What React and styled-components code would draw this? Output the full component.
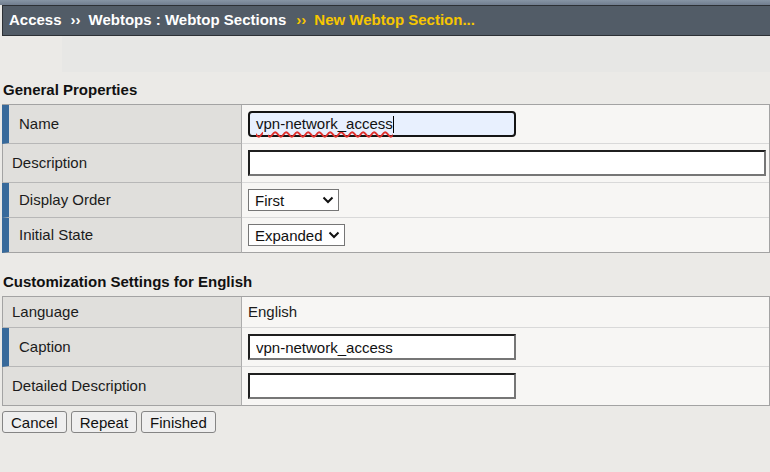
import styled, { createGlobalStyle } from 'styled-components';

const GlobalStyle = createGlobalStyle`
  html, body {
    margin: 0;
    background: #ebeae7;
    font-family: 'Liberation Sans', Arial, sans-serif;
    color: #1b1b1b;
  }
`;

const Page = styled.div`
  padding-left: 2px;
`;

const TopStrip = styled.div`
  background: linear-gradient(#8795a5, #707d8e);
  height: 5px;
  margin-left: -2px;
`;

const Breadcrumb = styled.div`
  background: #525c67;
  border-top: 1px solid #2c3035;
  border-bottom: 1px solid #2c3035;
  border-left: 1px solid #2c3035;
  color: #fff;
  font-size: 15px;
  font-weight: bold;
  height: 29px;
  line-height: 28px;
  padding-left: 6px;
  white-space: nowrap;
`;

const Crumb = styled.span`
  color: ${p => (p.current ? '#f7c600' : '#fff')};
`;

const Sep = styled.span`
  color: ${p => (p.current ? '#f7c600' : '#fff')};
  padding: 0 8px 0 ${p => (p.current ? 10 : 9)}px;
`;

const ToolbarBand = styled.div`
  height: 36px;
  margin-left: 60px;
  background: #e7e7e5;
`;

const Heading = styled.div`
  font-size: 15px;
  font-weight: bold;
  line-height: 18px;
  margin-top: ${p => p.gap}px;
  padding: 0 1px 5px;
  color: #111;
`;

const Table = styled.div`
  border-top: 1px solid #a3a3a3;
  border-right: 1px solid #a3a3a3;
`;

const Row = styled.div`
  display: flex;
  &:last-child > * {
    border-bottom-color: #a3a3a3;
  }
`;

const Label = styled.div`
  box-sizing: border-box;
  flex: 0 0 240px;
  display: flex;
  align-items: center;
  background: #e0dfdc;
  border-left: ${p => (p.required ? '7px solid #386a9b' : '1px solid #a3a3a3')};
  border-right: 1px solid #adadad;
  border-bottom: 1px solid #b7b7b7;
  padding-left: ${p => (p.required ? 10 : 9)}px;
  padding-bottom: 1px;
  font-size: 15px;
`;

const Value = styled.div`
  flex: 1;
  display: flex;
  align-items: center;
  background: #f7f6f4;
  border-bottom: 1px solid #d9d9d9;
  padding: 6px 3px 6px 6px;
  font-size: 15px;
  line-height: 18px;
`;

const TextInput = styled.input`
  box-sizing: border-box;
  width: ${p => (p.wide ? '100%' : '268px')};
  height: 26px;
  margin: 0;
  padding: 0 6px;
  background: #fff;
  border: 2px solid;
  border-color: #1f1f1f #767676 #767676 #1f1f1f;
  font-family: inherit;
  font-size: 15px;
  color: #111;
  outline: none;
`;

const FocusedInput = styled.div`
  box-sizing: border-box;
  width: 268px;
  height: 26px;
  display: flex;
  align-items: center;
  padding: 0 6px;
  background: #e8f0fe;
  border: 2px solid #141414;
  border-radius: 4px;
  font-size: 15px;
  color: #111;
`;

const Typed = styled.span`
  text-decoration: underline wavy #e0302c;
  text-decoration-thickness: 1.5px;
  text-underline-offset: 2px;
`;

const Caret = styled.span`
  display: inline-block;
  width: 1px;
  height: 17px;
  background: #000;
`;

const SelectWrap = styled.div`
  position: relative;
  display: inline-flex;
`;

const Select = styled.select`
  appearance: none;
  box-sizing: border-box;
  width: ${p => p.w}px;
  height: 22px;
  margin: 0;
  padding: 0 20px 0 6px;
  background: #fff;
  border: 1px solid #767676;
  border-radius: 0;
  font-family: inherit;
  font-size: 15px;
  color: #111;
`;

const Chevron = styled.svg`
  position: absolute;
  right: 5px;
  top: 7px;
  pointer-events: none;
`;

const Buttons = styled.div`
  display: flex;
  gap: 4px;
  margin-top: 5px;
`;

const Button = styled.button`
  height: 22px;
  padding: 0 8px;
  background: #efefef;
  border: 1px solid #858585;
  border-radius: 3px;
  font-family: inherit;
  font-size: 15px;
  color: #111;
`;

function Dropdown({ value, options, width }) {
  return (
    <SelectWrap>
      <Select w={width} defaultValue={value}>
        {options.map(o => <option key={o}>{o}</option>)}
      </Select>
      <Chevron width="12" height="8" viewBox="0 0 12 8">
        <path d="M1.5 1.5 L6 6 L10.5 1.5" fill="none" stroke="#111" strokeWidth="2" />
      </Chevron>
    </SelectWrap>
  );
}

export default function App() {
  return (
    <>
      <GlobalStyle />
      <Page>
        <TopStrip />
        <Breadcrumb>
          <Crumb>Access</Crumb>
          <Sep>››</Sep>
          <Crumb>Webtops : Webtop Sections</Crumb>
          <Sep current>››</Sep>
          <Crumb current>New Webtop Section...</Crumb>
        </Breadcrumb>
        <ToolbarBand />

        <Heading gap={9}>General Properties</Heading>
        <Table>
          <Row>
            <Label required>Name</Label>
            <Value>
              <FocusedInput>
                <Typed>vpn-network_access</Typed>
                <Caret />
              </FocusedInput>
            </Value>
          </Row>
          <Row>
            <Label>Description</Label>
            <Value><TextInput wide defaultValue="" /></Value>
          </Row>
          <Row>
            <Label required>Display Order</Label>
            <Value><Dropdown value="First" options={['First', 'Last']} width={91} /></Value>
          </Row>
          <Row>
            <Label required>Initial State</Label>
            <Value><Dropdown value="Expanded" options={['Expanded', 'Collapsed']} width={97} /></Value>
          </Row>
        </Table>

        <Heading gap={20}>Customization Settings for English</Heading>
        <Table>
          <Row>
            <Label>Language</Label>
            <Value>English</Value>
          </Row>
          <Row>
            <Label required>Caption</Label>
            <Value><TextInput defaultValue="vpn-network_access" /></Value>
          </Row>
          <Row>
            <Label>Detailed Description</Label>
            <Value><TextInput defaultValue="" /></Value>
          </Row>
        </Table>

        <Buttons>
          <Button>Cancel</Button>
          <Button>Repeat</Button>
          <Button>Finished</Button>
        </Buttons>
      </Page>
    </>
  );
}
